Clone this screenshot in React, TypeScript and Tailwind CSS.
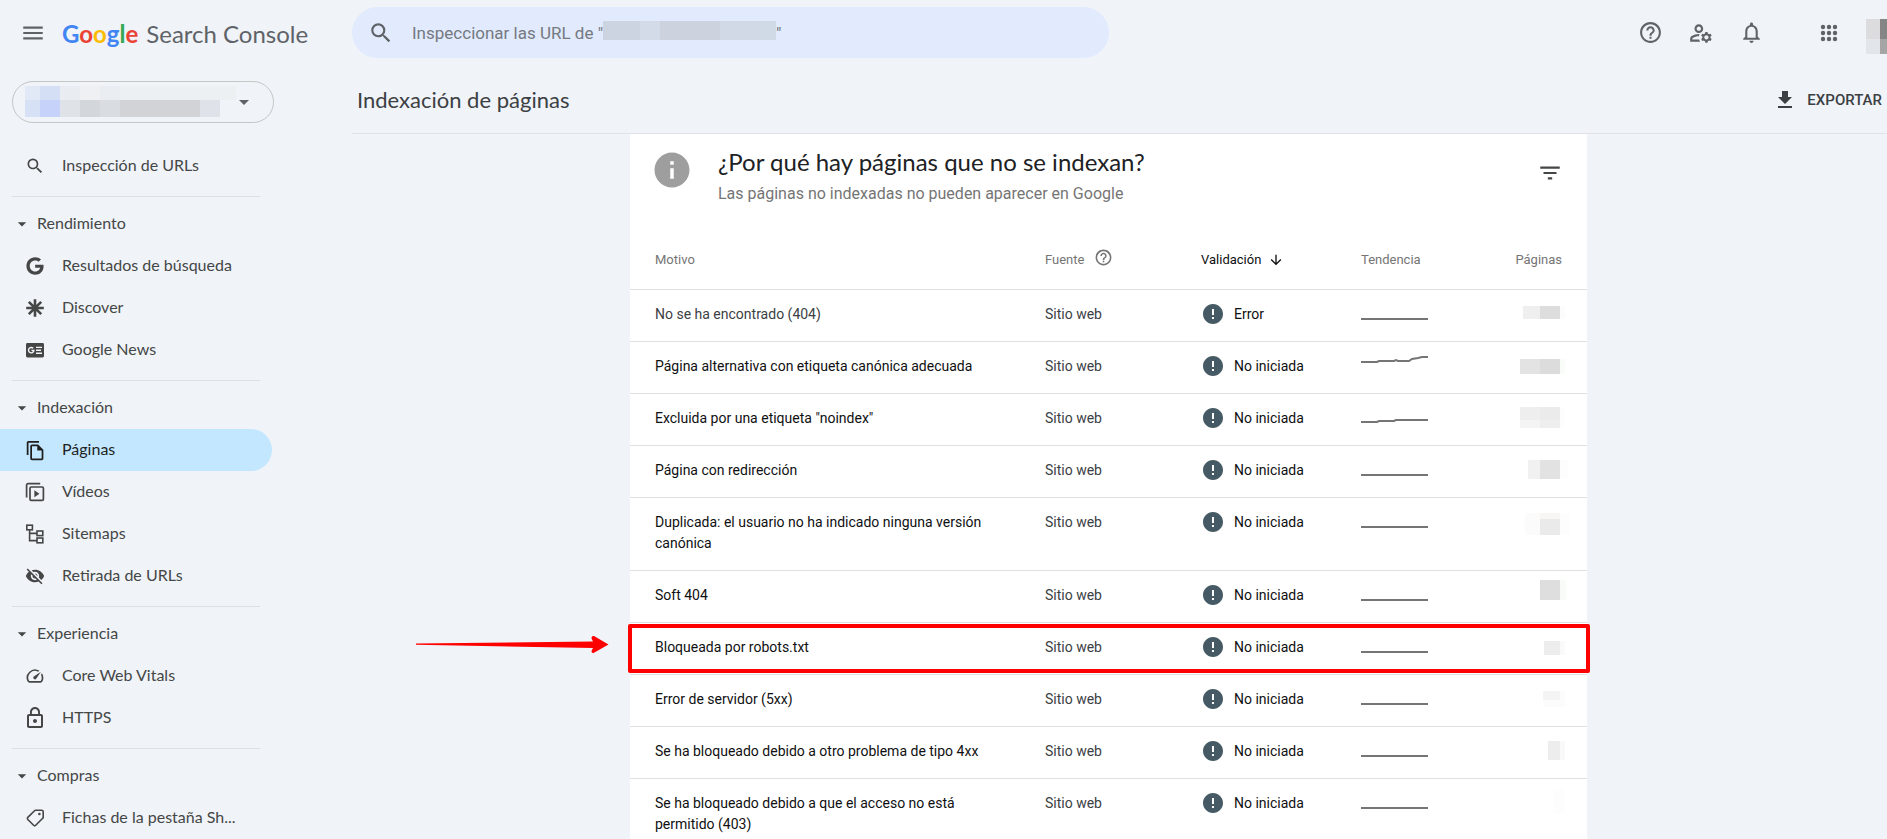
import type { ReactNode } from "react";
import { FaGoogle } from "react-icons/fa";
import {
  MdArrowDownward,
  MdArrowDropDown,
  MdError,
  MdFileDownload,
  MdFilterList,
  MdHelpOutline,
  MdInfo,
  MdLockOutline,
  MdMenu,
  MdNotificationsNone,
  MdOutlineFileCopy,
  MdOutlineManageAccounts,
  MdSearch,
  MdSpeed,
  MdVisibilityOff,
} from "react-icons/md";

type Block = [x: number, y: number, w: number, h: number, fill: string];

type NavItem = { label: string; icon: ReactNode; active?: boolean };

type Reason = {
  motivo: string;
  validacion: string;
  trend: string;
  blocks: Block[];
  read?: boolean;
  marked?: boolean;
};

function Mosaic({ width, height, blocks }: { width: number; height: number; blocks: Block[] }) {
  return (
    <svg width={width} height={height} className="block flex-none" shapeRendering="crispEdges" aria-hidden>
      {blocks.map(([x, y, w, h, fill], i) => (
        <rect key={i} x={x} y={y} width={w} height={h} fill={fill} />
      ))}
    </svg>
  );
}

function DiscoverIcon() {
  return (
    <svg width="20" height="20" viewBox="0 0 20 20" stroke="currentColor" strokeWidth="2.6">
      <path d="M10 1.2v17.6M1.2 10h17.6M3.8 3.8l12.4 12.4M16.2 3.8L3.8 16.2" />
      <circle cx="10" cy="10" r="2.6" fill="currentColor" stroke="none" />
    </svg>
  );
}

function NewsIcon() {
  return (
    <svg width="20" height="20" viewBox="0 0 20 20">
      <rect x="1" y="3" width="18" height="14.4" rx="1.4" fill="currentColor" />
      <path
        d="M8.2 8.3A2.7 2.7 0 1 0 8.9 10.4H6.4M11 7.4h6M11 10.3h5M11 13.2h6"
        fill="none"
        stroke="#f0f3f8"
        strokeWidth="1.4"
      />
    </svg>
  );
}

function VideosIcon() {
  return (
    <svg width="20" height="20" viewBox="0 0 20 20" fill="none" stroke="currentColor" strokeWidth="1.7">
      <path d="M1.6 15.4V3a1.4 1.4 0 0 1 1.4-1.4h12.2" />
      <rect x="5" y="5" width="13.4" height="13.4" rx="1.2" />
      <path d="M9.4 8.2v7l5-3.5z" fill="currentColor" stroke="none" />
    </svg>
  );
}

function SitemapsIcon() {
  return (
    <svg width="20" height="20" viewBox="0 0 20 20" fill="none" stroke="currentColor" strokeWidth="1.6">
      <rect x="1.8" y="1.2" width="5.6" height="4.6" />
      <rect x="12" y="7" width="5.8" height="4.6" />
      <rect x="12" y="14" width="5.8" height="4.8" />
      <path d="M4.6 5.8v10.8H12M4.6 9.4H12" />
    </svg>
  );
}

function TagIcon() {
  return (
    <svg width="20" height="20" viewBox="0 0 20 20" fill="none" stroke="currentColor" strokeWidth="1.6">
      <path d="M10.6 2.2h6a1.6 1.6 0 0 1 1.6 1.6v5.4a1.6 1.6 0 0 1-.5 1.1l-7 7a1.5 1.5 0 0 1-2.1 0l-5.8-5.8a1.5 1.5 0 0 1 0-2.1l6.7-6.7a1.6 1.6 0 0 1 1.1-.5z" />
      <circle cx="14.4" cy="6" r="1.3" fill="currentColor" stroke="none" />
    </svg>
  );
}

function AppsIcon() {
  const steps = [3, 9, 15];
  return (
    <svg width="18" height="18" viewBox="0 0 18 18" fill="currentColor">
      {steps.map((y) => steps.map((x) => <circle key={`${x}-${y}`} cx={x} cy={y} r="2.2" />))}
    </svg>
  );
}

const SECTIONS: { title: string; items: NavItem[] }[] = [
  {
    title: "Rendimiento",
    items: [
      { label: "Resultados de búsqueda", icon: <FaGoogle size={18} /> },
      { label: "Discover", icon: <DiscoverIcon /> },
      { label: "Google News", icon: <NewsIcon /> },
    ],
  },
  {
    title: "Indexación",
    items: [
      { label: "Páginas", icon: <MdOutlineFileCopy size={21} />, active: true },
      { label: "Vídeos", icon: <VideosIcon /> },
      { label: "Sitemaps", icon: <SitemapsIcon /> },
      { label: "Retirada de URLs", icon: <MdVisibilityOff size={20} /> },
    ],
  },
  {
    title: "Experiencia",
    items: [
      { label: "Core Web Vitals", icon: <MdSpeed size={20} /> },
      { label: "HTTPS", icon: <MdLockOutline size={24} /> },
    ],
  },
  {
    title: "Compras",
    items: [{ label: "Fichas de la pestaña Sh...", icon: <TagIcon /> }],
  },
];

const FLAT = "0,29 67,29";

const REASONS: Reason[] = [
  {
    motivo: "No se ha encontrado (404)",
    validacion: "Error",
    trend: FLAT,
    read: true,
    blocks: [[5, 16, 17, 13, "#efefef"], [22, 16, 20, 13, "#dddddd"], [42, 16, 5, 13, "#fbfcfb"]],
  },
  {
    motivo: "Página alternativa con etiqueta canónica adecuada",
    validacion: "No iniciada",
    trend: "0,20 16,20 18,19 33,19 35,18 37,19 48,19 51,17 57,16 61,15 67,15",
    blocks: [[2, 17, 20, 15, "#e3e3e3"], [22, 17, 20, 15, "#dcdcdc"], [42, 17, 5, 15, "#fafcfa"]],
  },
  {
    motivo: 'Excluida por una etiqueta "noindex"',
    validacion: "No iniciada",
    trend: "0,28 16,28 18,27 33,27 35,26 67,26",
    blocks: [
      [2, 13, 20, 13, "#eeeeee"],
      [22, 13, 20, 13, "#ebebeb"],
      [2, 26, 20, 8, "#f4f4f4"],
      [22, 26, 20, 8, "#eeeeee"],
      [42, 13, 5, 21, "#fcfdfc"],
    ],
  },
  {
    motivo: "Página con redirección",
    validacion: "No iniciada",
    trend: FLAT,
    blocks: [[10, 14, 12, 19, "#f1f1f2"], [22, 14, 20, 19, "#e2e2e2"], [42, 14, 8, 19, "#fdfdfd"]],
  },
  {
    motivo: "Duplicada: el usuario no ha indicado ninguna versión canónica",
    validacion: "No iniciada",
    trend: FLAT,
    blocks: [[7, 15, 15, 22, "#fafbfa"], [22, 15, 20, 6, "#f7f6f4"], [22, 21, 20, 16, "#eaeaea"], [42, 15, 9, 22, "#fdfdfd"]],
  },
  {
    motivo: "Soft 404",
    validacion: "No iniciada",
    trend: FLAT,
    blocks: [[22, 9, 20, 20, "#dedede"], [42, 9, 6, 20, "#f9fbf9"]],
  },
  {
    motivo: "Bloqueada por robots.txt",
    validacion: "No iniciada",
    trend: FLAT,
    marked: true,
    blocks: [[26, 18, 16, 14, "#ededed"], [42, 18, 5, 14, "#fafafa"]],
  },
  {
    motivo: "Error de servidor (5xx)",
    validacion: "No iniciada",
    trend: FLAT,
    blocks: [[25, 16, 17, 9, "#f4f4f4"], [25, 25, 17, 7, "#fbfcfb"], [42, 16, 5, 16, "#fcfcfc"]],
  },
  {
    motivo: "Se ha bloqueado debido a otro problema de tipo 4xx",
    validacion: "No iniciada",
    trend: FLAT,
    blocks: [[30, 14, 12, 19, "#ededed"], [42, 14, 5, 19, "#f9f9f9"]],
  },
  {
    motivo: "Se ha bloqueado debido a que el acceso no está permitido (403)",
    validacion: "No iniciada",
    trend: FLAT,
    blocks: [[35, 10, 12, 25, "#fcfdfc"]],
  },
];

function Header() {
  return (
    <header className="flex h-[65px] flex-none items-center text-[#5f6368]">
      <div className="flex w-[352px] flex-none items-center gap-4 pl-5">
        <button type="button" aria-label="Menú principal">
          <MdMenu size={26} />
        </button>
        <a href="#" className="flex items-baseline gap-2 pt-0.5 font-[Lato,sans-serif] text-2xl">
          <span className="font-bold">
            <span className="text-[#4285f4]">G</span>
            <span className="text-[#ea4335]">o</span>
            <span className="text-[#fbbc04]">o</span>
            <span className="text-[#4285f4]">g</span>
            <span className="text-[#34a853]">l</span>
            <span className="text-[#ea4335]">e</span>
          </span>
          <span>Search Console</span>
        </a>
      </div>

      <label className="flex h-[51px] w-[757px] items-center rounded-full bg-[#e1ebfd] pl-4 text-[17px] text-[#757980]">
        <MdSearch size={26} className="mr-[18px] flex-none text-[#5f6368]" />
        <span className="pt-0.5 whitespace-nowrap">Inspeccionar las URL de "</span>
        <Mosaic
          width={173}
          height={24}
          blocks={[
            [0, 0, 37, 19, "#cdd4e1"],
            [37, 0, 20, 19, "#d3dbe8"],
            [57, 0, 60, 19, "#ccd3df"],
            [117, 0, 40, 19, "#d1d9e6"],
            [157, 0, 16, 19, "#d0d9e6"],
          ]}
        />
        <span className="pt-0.5">"</span>
        <input type="text" aria-label="Inspeccionar URL" className="min-w-0 flex-1 bg-transparent outline-none" />
      </label>

      <div className="ml-auto flex items-center">
        <div className="flex items-center gap-[25px]">
          <button type="button" aria-label="Ayuda">
            <MdHelpOutline size={25} />
          </button>
          <button type="button" aria-label="Usuarios">
            <MdOutlineManageAccounts size={26} />
          </button>
          <button type="button" aria-label="Notificaciones">
            <MdNotificationsNone size={25} />
          </button>
        </div>
        <button type="button" aria-label="Aplicaciones" className="ml-14">
          <AppsIcon />
        </button>
        <button type="button" aria-label="Cuenta" className="mt-2 ml-7">
          <Mosaic
            width={21}
            height={36}
            blocks={[
              [0, 0, 14, 20, "#dcdcde"],
              [14, 0, 7, 20, "#858585"],
              [0, 20, 14, 15, "#e2e5ea"],
              [14, 20, 7, 15, "#a5a5a6"],
            ]}
          />
        </button>
      </div>
    </header>
  );
}

function Sidebar() {
  return (
    <aside className="w-[352px] flex-none font-[Lato,sans-serif] text-base text-[#444746]">
      <button
        type="button"
        aria-label="Seleccionar propiedad"
        className="mt-4 ml-3 flex h-[42px] w-[262px] items-center rounded-full border border-[#c4c7c5] pl-3"
      >
        <Mosaic
          width={212}
          height={32}
          blocks={[
            [0, 0, 15, 14, "#e2e9f6"],
            [15, 0, 20, 14, "#d4dff6"],
            [35, 0, 20, 14, "#e9edf2"],
            [55, 0, 20, 14, "#eef0f3"],
            [75, 0, 20, 14, "#eaedf1"],
            [95, 0, 116, 14, "#edf0f3"],
            [0, 14, 15, 17, "#d7e1f6"],
            [15, 14, 20, 17, "#c7d2fb"],
            [35, 14, 20, 17, "#dfe2e6"],
            [55, 14, 20, 17, "#d3d6da"],
            [75, 14, 20, 17, "#d9dce0"],
            [95, 14, 80, 17, "#d1d3d7"],
            [175, 14, 20, 17, "#dfe3e9"],
          ]}
        />
        <MdArrowDropDown size={24} className="ml-[-5px] text-[#5f6368]" />
      </button>

      <nav className="mt-[22px]">
        <NavLink label="Inspección de URLs" icon={<MdSearch size={20} />} />
        {SECTIONS.map((section) => (
          <section key={section.title}>
            <hr className="mt-[9px] mb-[6px] ml-3 w-[248px] border-[#dddfe3]" />
            <button type="button" className="flex h-[42px] w-full items-center pl-3">
              <MdArrowDropDown size={20} />
              <span className="ml-[5px] pb-0.5">{section.title}</span>
            </button>
            {section.items.map((item) => (
              <NavLink key={item.label} {...item} />
            ))}
          </section>
        ))}
      </nav>
    </aside>
  );
}

function NavLink({ label, icon, active }: NavItem) {
  return (
    <a
      href="#"
      aria-current={active ? "page" : undefined}
      className={`flex h-[42px] w-[272px] items-center rounded-r-full pl-6 ${
        active ? "bg-[#c2e7ff] text-[#1f1f1f]" : ""
      }`}
    >
      <span className="flex w-[22px] flex-none items-center justify-center [&>svg]:flex-none">{icon}</span>
      <span className="ml-4 pb-0.5">{label}</span>
    </a>
  );
}

function ReasonRow({ reason }: { reason: Reason }) {
  return (
    <tr className="relative border-b border-[#e0e0e0] align-top">
      <td className={`pt-[14px] pr-11 pb-4 pl-[25px] ${reason.read ? "text-[#3c4043]" : "text-[#0f1011]"}`}>
        {reason.motivo}
        {reason.marked && (
          <>
            <span className="pointer-events-none absolute top-0.5 right-[-3px] bottom-0 left-[-2px] rounded-xs border-4 border-[#fe0000]" />
            <svg
              width="194"
              height="20"
              viewBox="0 0 194 20"
              className="absolute top-[13px] left-[-215px]"
              fill="#fe0000"
              aria-hidden
            >
              <path d="M1 8.6L178 6.6L176.5 3.2Q176.4.6 179 1L193.5 9.6L179 17.8Q176.4 18.6 176.5 16L178 13L1 9.8z" />
            </svg>
          </>
        )}
      </td>
      <td className="pt-[14px] pb-4 text-[#3c4043]">Sitio web</td>
      <td className="pt-[14px] pb-4 text-[#0f1011]">
        <span className="flex h-[21px] items-center gap-[9px]">
          <MdError size={24} className="text-[#455a64]" />
          {reason.validacion}
        </span>
      </td>
      <td>
        <svg width="68" height="40" className="block" fill="none" stroke="#757575" strokeWidth="2" aria-hidden>
          <polyline points={reason.trend} />
        </svg>
      </td>
      <td>
        <div className="flex justify-end pr-[15px]">
          <Mosaic width={54} height={40} blocks={reason.blocks} />
        </div>
      </td>
    </tr>
  );
}

function ReasonsCard() {
  return (
    <section className="mx-auto w-full max-w-[957px] bg-white">
      <div className="flex h-[103px] items-start pr-6 pl-[21px]">
        <MdInfo size={42} className="mt-[15px] flex-none text-[#9e9e9e]" />
        <div className="mt-3 ml-[25px]">
          <h2 className="font-[Lato,sans-serif] text-2xl text-[#202124]">¿Por qué hay páginas que no se indexan?</h2>
          <p className="text-base leading-8 text-[#757575]">Las páginas no indexadas no pueden aparecer en Google</p>
        </div>
        <button type="button" aria-label="Filtrar" className="mt-[26px] ml-auto text-[#444746]">
          <MdFilterList size={26} />
        </button>
      </div>

      <table className="w-full table-fixed text-sm leading-[21px] text-[#202124]">
        <colgroup>
          <col />
          <col className="w-[156px]" />
          <col className="w-[160px]" />
          <col className="w-[120px]" />
          <col className="w-[106px]" />
        </colgroup>
        <thead>
          <tr className="h-[52px] border-b border-[#e0e0e0] text-left text-[13px] text-[#757575] [&>th]:pb-1.5 [&>th]:font-normal">
            <th className="pl-[25px]">Motivo</th>
            <th>
              <span className="flex items-center gap-[10px]">
                Fuente <MdHelpOutline size={19} className="mb-1" />
              </span>
            </th>
            <th>
              <button type="button" className="flex items-center gap-[7px] text-[#0f1011]">
                Validación <MdArrowDownward size={16} />
              </button>
            </th>
            <th>Tendencia</th>
            <th className="pr-[25px] text-right">Páginas</th>
          </tr>
        </thead>
        <tbody>
          {REASONS.map((reason) => (
            <ReasonRow key={reason.motivo} reason={reason} />
          ))}
        </tbody>
      </table>
    </section>
  );
}

export default function App() {
  return (
    <div className="flex h-screen flex-col overflow-hidden bg-[#f0f3f8] font-[Roboto,sans-serif]">
      <Header />
      <div className="flex min-h-0 flex-1">
        <Sidebar />
        <main className="min-w-0 flex-1">
          <div className="flex h-[69px] items-center justify-between border-b border-[#dfe2e7] pr-[5px] pl-[5px] text-[#3c4043]">
            <h1 className="font-[Lato,sans-serif] text-[22px]">Indexación de páginas</h1>
            <button type="button" className="flex items-center gap-[10px] pt-0.5 text-[15px] font-medium">
              <MdFileDownload size={24} />
              EXPORTAR
            </button>
          </div>
          <div className="pr-[22px]">
            <ReasonsCard />
          </div>
        </main>
      </div>
    </div>
  );
}
